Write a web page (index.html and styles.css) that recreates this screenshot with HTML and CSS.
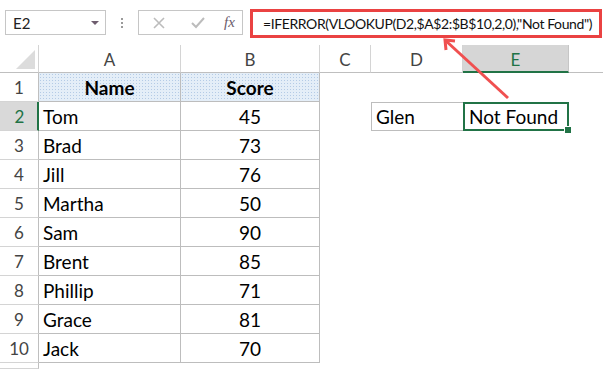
FILE: index.html
```html
<!DOCTYPE html>
<html lang="en">
<head>
  <meta charset="UTF-8">
  <title>IFERROR VLOOKUP</title>
  <link rel="stylesheet" href="styles.css">
</head>
<body>

  <div class="formula-bar">
    <div class="name-box">
      <span>E2</span>
      <span class="caret"></span>
    </div>
    <div class="grip"></div>
    <div class="buttons">
      <svg width="14" height="14" viewBox="0 0 14 14"><path d="M2 2 L12 12 M12 2 L2 12" stroke="#bcbcbc" stroke-width="1.6" fill="none"/></svg>
      <svg width="16" height="14" viewBox="0 0 16 14"><path d="M2 7 L6 11 L14 2" stroke="#bcbcbc" stroke-width="2" fill="none"/></svg>
      <span class="fx">fx</span>
    </div>
    <div class="formula">=IFERROR(VLOOKUP(D2,$A$2:$B$10,2,0),"Not Found")</div>
  </div>

  <div class="sheet">
    <!-- column headers -->
    <div class="corner"><span class="tri"></span></div>
    <div class="ch">A</div>
    <div class="ch">B</div>
    <div class="ch">C</div>
    <div class="ch">D</div>
    <div class="ch sel">E</div>
    <div class="ch last"></div>

    <!-- row 1 -->
    <div class="rh">1</div>
    <div class="c head">Name</div>
    <div class="c head">Score</div>
    <div class="e"></div><div class="e"></div><div class="e"></div><div class="e"></div>

    <!-- row 2 -->
    <div class="rh sel">2</div>
    <div class="c">Tom</div>
    <div class="c num">45</div>
    <div class="e"></div>
    <div class="box">Glen</div>
    <div class="active">Not Found</div>
    <div class="e"></div>

    <div class="rh">3</div><div class="c">Brad</div><div class="c num">73</div>
    <div class="e"></div><div class="e"></div><div class="e"></div><div class="e"></div>

    <div class="rh">4</div><div class="c">Jill</div><div class="c num">76</div>
    <div class="e"></div><div class="e"></div><div class="e"></div><div class="e"></div>

    <div class="rh">5</div><div class="c">Martha</div><div class="c num">50</div>
    <div class="e"></div><div class="e"></div><div class="e"></div><div class="e"></div>

    <div class="rh">6</div><div class="c">Sam</div><div class="c num">90</div>
    <div class="e"></div><div class="e"></div><div class="e"></div><div class="e"></div>

    <div class="rh">7</div><div class="c">Brent</div><div class="c num">85</div>
    <div class="e"></div><div class="e"></div><div class="e"></div><div class="e"></div>

    <div class="rh">8</div><div class="c">Phillip</div><div class="c num">71</div>
    <div class="e"></div><div class="e"></div><div class="e"></div><div class="e"></div>

    <div class="rh">9</div><div class="c">Grace</div><div class="c num">81</div>
    <div class="e"></div><div class="e"></div><div class="e"></div><div class="e"></div>

    <div class="rh">10</div><div class="c">Jack</div><div class="c num">70</div>
    <div class="e"></div><div class="e"></div><div class="e"></div><div class="e"></div>

    <div class="rh"></div>
  </div>

  <svg class="arrow" width="603" height="369" viewBox="0 0 603 369">
    <path d="M508 98 L445 40" stroke="#f05050" stroke-width="3" fill="none"/>
    <path d="M455 41 L445 40 L446 50" stroke="#f05050" stroke-width="3" fill="none"/>
  </svg>

</body>
</html>
```

FILE: styles.css
```css
body {
  margin: 0;
  width: 603px;
  height: 369px;
  overflow: hidden;
  background: white;
  font-family: Lato, "Open Sans", sans-serif;
  position: relative;
}

.formula-bar {
  height: 45px;
  display: flex;
  align-items: flex-start;
  padding-top: 10px;
  box-sizing: border-box;
}

.name-box {
  margin-left: 5px;
  width: 101px;
  height: 25px;
  box-sizing: border-box;
  border: 1px solid #c6c6c6;
  display: flex;
  align-items: center;
  justify-content: space-between;
  padding: 0 6px 0 7px;
  font-size: 15px;
  color: #222;
}

.caret {
  width: 0;
  height: 0;
  border-left: 4px solid transparent;
  border-right: 4px solid transparent;
  border-top: 4px solid #6e5d6e;
}

.grip {
  margin: 8px 0 0 15px;
  width: 2px;
  height: 11px;
  background: repeating-linear-gradient(#9a9a9a 0 2px, transparent 2px 4px);
}

.buttons {
  margin-left: 15px;
  width: 105px;
  height: 25px;
  box-sizing: border-box;
  border: 1px solid #c6c6c6;
  display: flex;
  align-items: center;
  padding-left: 13px;
  gap: 24px;
}

.fx {
  font-family: "Liberation Serif", serif;
  font-style: italic;
  font-size: 15px;
  color: #6b5b6b;
  margin-left: -6px;
}

.formula {
  margin: -1px 0 0 7px;
  width: 352px;
  height: 29px;
  box-sizing: border-box;
  border: 3px solid #ea4242;
  padding-left: 10px;
  font-size: 14px;
  letter-spacing: -0.4px;
  line-height: 23px;
  color: #111;
  white-space: nowrap;
  overflow: hidden;
}

.sheet {
  display: grid;
  grid-template-columns: 39px 142px 139px 51px 92px 106px 1fr;
  grid-template-rows: 28px repeat(10, 29px) 1fr;
  height: 324px;
}

.sheet > div {
  box-sizing: border-box;
  display: flex;
  align-items: center;
  font-size: 19px;
  color: #000;
  white-space: nowrap;
}

.corner {
  border-right: 1px solid #d4d4d4;
  border-bottom: 1px solid #bfbfbf;
  position: relative;
}

.tri {
  position: absolute;
  right: 3px;
  bottom: 3px;
  width: 0;
  height: 0;
  border-left: 19px solid transparent;
  border-bottom: 19px solid #dcdcdc;
}

.sheet > .ch {
  justify-content: center;
  font-size: 17px;
  color: #444;
  border-right: 1px solid #d4d4d4;
  border-bottom: 1px solid #bfbfbf;
  padding-top: 2px;
}

.sheet > .ch.sel {
  background: #d6d6d6;
  color: #217346;
  border-bottom: 2px solid #217346;
  border-right: 1px solid #c6c6c6;
}

.sheet > .ch.last {
  border-right: none;
}

.sheet > .rh {
  justify-content: center;
  font-size: 17px;
  color: #444;
  border-right: 1px solid #bfbfbf;
  border-bottom: 1px solid #d4d4d4;
}

.sheet > .rh.sel {
  background: #d9d9d9;
  color: #217346;
  border-right: 2px solid #217346;
  padding-left: 2px;
}

.sheet > .c {
  border-right: 1px solid #bdbdbd;
  border-bottom: 1px solid #bdbdbd;
  padding-left: 4px;
}

.sheet > .num {
  justify-content: center;
  padding-left: 0;
}

.sheet > .head {
  justify-content: center;
  padding-left: 0;
  font-weight: bold;
  background-color: #e4eef8;
  background-image: radial-gradient(#b4cbe6 0.6px, transparent 0.9px);
  background-size: 3px 3px;
}

.sheet > .box {
  border: 1px solid #bdbdbd;
  border-right: none;
  padding-left: 4px;
}

.sheet > .active {
  border: 2px solid #217346;
  padding-left: 4px;
  position: relative;
}

.active::after {
  content: "";
  position: absolute;
  right: -5px;
  bottom: -5px;
  width: 6px;
  height: 6px;
  background: #217346;
  border: 1px solid white;
}

.arrow {
  position: absolute;
  left: 0;
  top: 0;
  pointer-events: none;
}
```
